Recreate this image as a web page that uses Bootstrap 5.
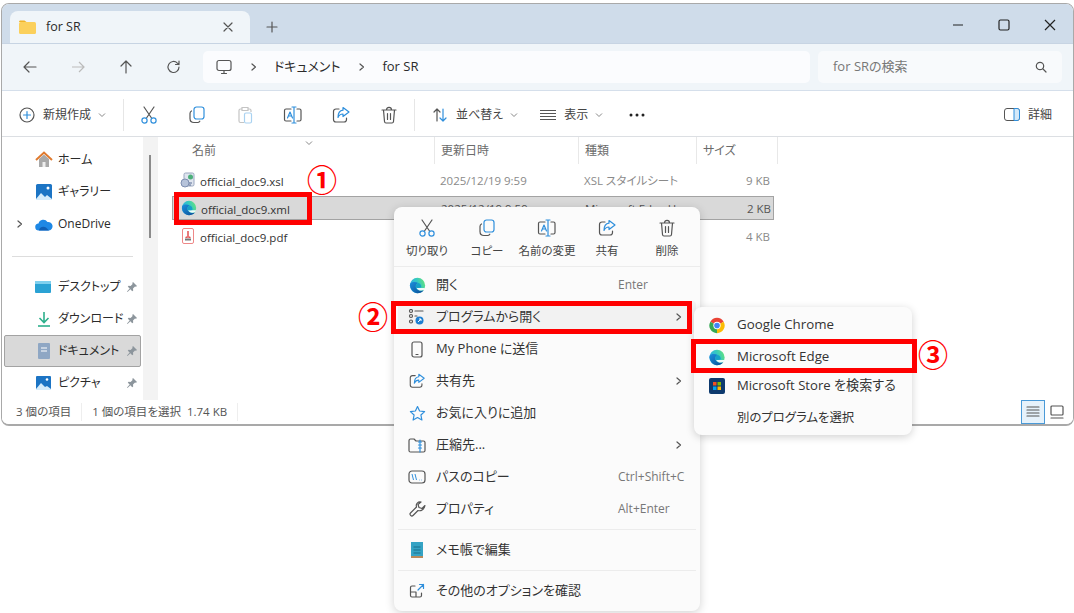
<!DOCTYPE html>
<html lang="ja">
<head>
  <meta charset="UTF-8" />
  <title>for SR</title>
  <link href="https://cdn.jsdelivr.net/npm/bootstrap@5.3.0/dist/css/bootstrap.min.css" rel="stylesheet" />
  <style>
    body { font-family: "Open Sans", "Noto Sans CJK JP", sans-serif; font-size: 12px; color: #2b2b2b; background: #fff; font-feature-settings: "palt"; }
    svg { flex: none; display: block; }
    .ln { fill: none; stroke: #555; stroke-width: 1.2; stroke-linecap: round; stroke-linejoin: round; }
    .ln-blue { fill: none; stroke: #2f8fdc; stroke-width: 1.2; stroke-linecap: round; stroke-linejoin: round; }
    .stage { width: 1074px; height: 613px; overflow: hidden; }
    .win { width: 1073px; height: 423px; margin: 3px 0 0 1px; border: 1px solid #a9a9a9; border-bottom-width: 2px; border-radius: 8px; overflow: hidden; }
    .tabbar { height: 39px; background: #cfdcea; padding: 7px 0 0 8px; }
    .wintab { width: 240px; height: 32px; background: #f0f5f9; border-radius: 8px 8px 0 0; padding: 0 16px 0 9px; }
    .wintab span { margin-left: 10px; font-size: 12.5px; }
    .newtab { margin-left: 16px; }
    .winctl { margin-left: auto; margin-top: -4px; margin-right: 17px; gap: 32px; }
    .navrow { height: 48px; background: #f0f5f9; border-top: 1px solid #c7d4e3; border-bottom: 1px solid #d5dfeb; padding: 0 10px 0 4px; }
    .navbtn { width: 48px; }
    .addr { margin-left: 5px; width: 607px; height: 32px; background: #fbfcfe; border-radius: 5px; padding-left: 13px; font-size: 13px; }
    .crumb { margin-left: 15px; }
    .crumbgt { margin-left: 17px; }
    .searchbox { margin-left: 8px; width: 244px; height: 32px; background: #f8fafc; border-radius: 5px; padding: 0 15px; color: #777; font-size: 13px; }
    .toolrow { height: 47px; background: #fff; border-bottom: 1px solid #dcdfe3; color: #444; padding-top: 2px; }
    .toolbtn { width: 48px; }
    .toolsep { width: 1px; height: 32px; background: #e6e6e6; margin: 0 1px; }
    .chev-s { margin-left: 6px; }
    .plusicon { margin-left: 17px; }
    .viewicon { margin-left: 21px; }
    .moreicon { margin-left: 25px; }
    .detaillabel { margin-left: 8px; margin-right: 21px; }
    .filemain { height: 264px; }
    .side { width: 141px; padding-top: 7px; overflow: hidden; flex: none; }
    .sideitem { height: 32px; position: relative; padding-left: 33px; font-size: 12px; }
    .sideitem.active { background: #d9d9d9; border: 1px solid #a3a3a3; margin: 0 2px; padding-left: 30px; border-radius: 2px; }
    .sidename { margin-left: 5px; white-space: nowrap; }
    .sidepin { margin-left: auto; margin-right: 5px; }
    .sideitem.active .sidepin { margin-right: 2px; }
    .oneexp { left: 13px; }
    .sidesep { height: 1px; background: #ddd; margin: 16px 10px 14px 10px; }
    .sidetrack { width: 15px; background: #f3f3f3; flex: none; position: relative; }
    .sidethumb { position: absolute; left: 6px; top: 18px; width: 2px; height: 83px; background: #8b8b8b; }
    .filelist { padding-left: 14px; position: relative; }
    .gridrow { display: grid; grid-template-columns: 262px 144px 118px 82px; width: 602px; }
    .headrow { height: 27px; color: #6b6b6b; margin-bottom: 4px; }
    .headrow > div { border-left: 1px solid #e8e8e8; padding-left: 6px; display: flex; align-items: center; }
    .headrow > div:first-child { border-left: 0; padding-left: 20px; }
    .headrow > div:last-child { border-right: 1px solid #e8e8e8; }
    .sortmark { position: absolute; left: 146px; top: 1px; }
    .filerow { height: 24px; margin-bottom: 4px; align-items: center; color: #8a8a8a; }
    .filerow.picked { background: #d9d9d9; border: 1px solid #a3a3a3; color: #555; }
    .fname { color: #333; padding-left: 8px; gap: 4px; font-size: 11.5px; }
    .fname span { padding-top: 2px; }
    .fcol { padding: 1px 0 0 6px; white-space: nowrap; font-size: 11.5px; }
    .fsize { text-align: right; padding: 1px 8px 0 0; font-size: 11.5px; }
    .statusrow { height: 24px; background: #fff; color: #555; padding-left: 14px; font-size: 11.5px; }
    .statsep { width: 1px; height: 18px; background: #eee; margin: 0 10px; }
    .viewbtn { width: 24px; height: 24px; background: #e6f2fb; border: 1px solid #4a9ad8; margin-left: auto; }
    .viewbtn2 { margin: 0 9px 0 5px; }
    .ctxmenu { position: absolute; left: 394px; top: 207px; width: 306px; height: 404px; background: #fbfbfb; border-radius: 8px; box-shadow: 0 2px 10px rgba(0,0,0,.18); z-index: 5; padding-top: 11px; }
    .ctxtop { height: 48px; padding: 0 3px; }
    .ctxtopbtn { width: 60px; gap: 4px; font-size: 11.5px; color: #444; white-space: nowrap; }
    .ctxline { height: 1px; background: #ececec; margin: 0 0 2px 0; }
    .ctxline.thin { margin: 4px; }
    .ctxitem { height: 32px; padding: 0 10px 0 12px; font-size: 13px; color: #333; position: relative; white-space: nowrap; }
    .ctxitem.current { background: #f2f2f2; margin: 0 4px; padding: 0 12px 0 8px; border-radius: 4px; }
    .ctxicon { width: 22px; margin-right: 8px; display: flex; justify-content: center; }
    .ctxkey { position: absolute; left: 224px; color: #777; font-size: 12px; }
    .ctxarrow { margin-left: auto; margin-right: 6px; }
    .submenu { position: absolute; left: 694px; top: 307px; width: 218px; height: 128px; background: #fbfbfb; border-radius: 8px; box-shadow: 0 2px 8px rgba(0,0,0,.18); z-index: 6; padding-top: 2px; }
    .subitem { height: 32px; padding-left: 13px; font-size: 13.3px; color: #333; white-space: nowrap; }
    .subitem.tight { margin-top: -3px; font-size: 13.1px; }
    .subitem.plainjp { font-size: 12.4px; }
    .subicon { width: 20px; margin-right: 10px; }
    .redbox { position: absolute; border: 5px solid #f00; z-index: 8; }
    .redbox.b1 { left: 174px; top: 192px; width: 138px; height: 33px; }
    .redbox.b2 { left: 391px; top: 301px; width: 301px; height: 33px; }
    .redbox.b3 { left: 691px; top: 339px; width: 226px; height: 34px; }
    .redmark { position: absolute; color: #f00; font-family: "Noto Sans CJK JP", sans-serif; font-weight: 700; font-size: 30px; line-height: 1; z-index: 8; width: 30px; text-align: center; font-feature-settings: normal; }
    .redmark.m1 { left: 307px; top: 163px; }
    .redmark.m2 { left: 358px; top: 300px; }
    .redmark.m3 { left: 918px; top: 338px; }
  </style>
</head>
<body class="m-0">

  <svg width="0" height="0" class="position-absolute">
    <defs>
      <linearGradient id="edgeA" x1="0" y1="0.6" x2="1" y2="0.2"><stop offset="0" stop-color="#2fa8e8" /><stop offset=".55" stop-color="#35c9c0" /><stop offset="1" stop-color="#66e37a" /></linearGradient>
      <linearGradient id="edgeB" x1="0" y1="0" x2="1" y2="1"><stop offset="0" stop-color="#1b8fdc" /><stop offset="1" stop-color="#0b4f96" /></linearGradient>
      <symbol id="i-edge" viewBox="0 0 20 20">
        <circle cx="10" cy="10" r="9" fill="url(#edgeA)" />
        <path d="M1.200 8C.8 14 5 19 10 19c3 0 5.700-1.300 7.500-3.500C14 17 9 16 8 12c-.5-2.500 1-4.500 3-5C7 5 3 5.500 1.200 8z" fill="url(#edgeB)" />
        <path d="M9 12.500c1 3 5 4.300 8.700 2.500l1.100-2.200H11c-1 0-1.500 0-2-.3z" fill="#fff" opacity=".92" />
        <path d="M8 12c-.5-2.500 1-4.500 3-5 2 .5 3.300 2 3.400 4.500 0 .8-.7 1.300-3.400 1.300-1 0-1.500 0-2-.3z" fill="#16a0c8" />
      </symbol>
      <symbol id="i-cut" viewBox="0 0 20 20">
        <path class="ln" d="M5 2l7.500 11M15 2L7.500 13" />
        <circle class="ln-blue" cx="5.500" cy="15.500" r="2.600" /><circle class="ln-blue" cx="14.500" cy="15.500" r="2.600" />
      </symbol>
      <symbol id="i-copy" viewBox="0 0 20 20">
        <rect class="ln-blue" x="7" y="2" width="10" height="12" rx="2.500" />
        <path class="ln" d="M4.500 6C3.500 6.500 3 7.500 3 8.500v5C3 16 4.500 17.500 7 17.500h3.500c1 0 1.800-.5 2.300-1.300" />
      </symbol>
      <symbol id="i-paste" viewBox="0 0 20 20">
        <path fill="none" stroke="#c4c4c4" stroke-width="1.200" d="M7 4H5.500C4.500 4 4 4.500 4 5.500V16c0 1 .5 1.500 1.500 1.500H9M13 4h1.500c1 0 1.500.5 1.500 1.500V7M7 2.500h6v3H7z" />
        <rect x="9.500" y="8" width="7" height="10" rx="1.500" fill="none" stroke="#a9d2f1" stroke-width="1.200" />
      </symbol>
      <symbol id="i-rename" viewBox="0 0 22 20">
        <path class="ln" d="M9 4H4C3 4 2.500 4.500 2.500 5.500v9c0 1 .5 1.500 1.500 1.500h5M15 4h2.500c1 0 1.500.5 1.500 1.500v9c0 1-.5 1.500-1.500 1.500H15" />
        <path class="ln-blue" d="M12 2v16M10 2h4M10 18h4M5.500 13L8 7l2.500 6M6.500 11h3" />
      </symbol>
      <symbol id="i-share" viewBox="0 0 20 20">
        <path class="ln" d="M8 4H5C3.500 4 2.500 5 2.500 6.500v8C2.500 16 3.500 17 5 17h8c1.500 0 2.500-1 2.500-2.500V13" />
        <path class="ln-blue" d="M12 2.500L18 7l-6 4.500V9C9.500 9 8 10 7 12.500 7 8 9 5.500 12 5.200z" />
      </symbol>
      <symbol id="i-trash" viewBox="0 0 20 20">
        <path class="ln" d="M3 5h14M7.500 5c0-3.500 5-3.500 5 0M4.500 5l1 11.500c.1 1 .7 1.500 1.500 1.500h6c.8 0 1.400-.5 1.500-1.500l1-11.500M8.500 8.500v6M11.500 8.500v6" />
      </symbol>
      <symbol id="i-chev" viewBox="0 0 10 10"><path class="ln" d="M3 2l3.500 3L3 8" /></symbol>
      <symbol id="i-down" viewBox="0 0 10 10"><path d="M2 3.500L5 6.500 8 3.500" fill="none" stroke="#888" stroke-width="1" /></symbol>
      <symbol id="i-pin" viewBox="0 0 12 12"><path d="M7 1l4 4-1 .7-1-.3-2 2 .2 2-1 .8L4.400 8.300 1.500 11 1 10.500 3.700 7.600 1.800 5.800l.8-1 2 .2 2-2-.3-1z" fill="#8c959c" /></symbol>
      <symbol id="i-arrow" viewBox="0 0 16 16"><path class="ln" d="M14 8H2M7 3L2 8l5 5" /></symbol>
    </defs>
  </svg>

  <div class="stage position-relative">

    <div class="win d-flex flex-column">

      <div class="tabbar d-flex flex-none">
        <div class="wintab d-flex align-items-center">
          <svg width="17" height="14" viewBox="0 0 17 14"><path d="M0 2c0-1 .5-1.500 1.500-1.500h4L7.500 2H0z" fill="#f0b429" /><rect y="2" width="17" height="12" rx="1.500" fill="#fbd05c" /></svg>
          <span>for SR</span>
          <svg class="ms-auto" width="12" height="12" viewBox="0 0 12 12"><path class="ln" d="M2 2l8 8M10 2l-8 8" /></svg>
        </div>
        <svg class="newtab align-self-center" width="12" height="12" viewBox="0 0 12 12"><path class="ln" d="M6 1v10M1 6h10" /></svg>
        <div class="winctl d-flex align-items-center">
          <svg width="12" height="12" viewBox="0 0 12 12"><path d="M1 6h10" stroke="#222" stroke-width="1.200" /></svg>
          <svg width="16" height="12" viewBox="0 0 16 12"><rect x="3" y="1" width="10" height="10" rx="1.500" fill="none" stroke="#222" stroke-width="1.200" /></svg>
          <svg width="12" height="12" viewBox="0 0 12 12"><path d="M1 1l10 10M11 1L1 11" stroke="#222" stroke-width="1.200" /></svg>
        </div>
      </div>

      <div class="navrow d-flex align-items-center flex-none">
        <div class="navbtn d-flex justify-content-center"><svg width="16" height="16"><use href="#i-arrow" /></svg></div>
        <div class="navbtn d-flex justify-content-center"><svg width="16" height="16" viewBox="0 0 16 16"><path fill="none" stroke="#bbb" stroke-width="1.200" d="M2 8h12M9 3l5 5-5 5" /></svg></div>
        <div class="navbtn d-flex justify-content-center"><svg width="16" height="16" viewBox="0 0 16 16"><path class="ln" d="M8 14V2M3 7l5-5 5 5" /></svg></div>
        <div class="navbtn d-flex justify-content-center"><svg width="16" height="16" viewBox="0 0 16 16"><path class="ln" d="M13 8a5.500 5.500 0 1 1-1.600-3.900L13 5.500M13 2v3.500H9.500" /></svg></div>
        <div class="addr d-flex align-items-center">
          <svg width="16" height="16" viewBox="0 0 16 16"><rect class="ln" x="1" y="1.500" width="14" height="10" rx="2" /><path class="ln" d="M5.500 14.500h5M8 11.500v3" /></svg>
          <svg class="crumbgt" width="10" height="10"><use href="#i-chev" /></svg>
          <span class="crumb">ドキュメント</span>
          <svg class="crumbgt" width="10" height="10"><use href="#i-chev" /></svg>
          <span class="crumb">for SR</span>
        </div>
        <div class="searchbox d-flex align-items-center justify-content-between">
          <span>for SRの検索</span>
          <svg width="12" height="12" viewBox="0 0 12 12"><circle class="ln" cx="5" cy="5" r="3.700" /><path class="ln" d="M8 8l3 3" /></svg>
        </div>
      </div>

      <div class="toolrow d-flex align-items-center flex-none">
        <svg class="plusicon" width="16" height="16" viewBox="0 0 16 16"><circle class="ln" cx="8" cy="8" r="7" /><path class="ln-blue" d="M8 4.500v7M4.500 8h7" /></svg>
        <span class="ms-2">新規作成</span>
        <svg class="chev-s" width="10" height="10"><use href="#i-down" /></svg>
        <div class="toolsep ms-3"></div>
        <div class="toolbtn d-flex justify-content-center"><svg width="20" height="20"><use href="#i-cut" /></svg></div>
        <div class="toolbtn d-flex justify-content-center"><svg width="20" height="20"><use href="#i-copy" /></svg></div>
        <div class="toolbtn d-flex justify-content-center"><svg width="20" height="20"><use href="#i-paste" /></svg></div>
        <div class="toolbtn d-flex justify-content-center"><svg width="22" height="20"><use href="#i-rename" /></svg></div>
        <div class="toolbtn d-flex justify-content-center"><svg width="20" height="20"><use href="#i-share" /></svg></div>
        <div class="toolbtn d-flex justify-content-center"><svg width="20" height="20"><use href="#i-trash" /></svg></div>
        <div class="toolsep"></div>
        <svg class="ms-3" width="16" height="16" viewBox="0 0 16 16"><path class="ln" d="M5 14V2M2 5l3-3 3 3" /><path class="ln-blue" d="M11 2v12M8 11l3 3 3-3" /></svg>
        <span class="ms-2">並べ替え</span>
        <svg class="chev-s" width="10" height="10"><use href="#i-down" /></svg>
        <svg class="viewicon" width="16" height="12" viewBox="0 0 16 12"><path class="ln" d="M0 1.500h16M0 4.500h16M0 7.500h16M0 10.500h16" /></svg>
        <span class="ms-2">表示</span>
        <svg class="chev-s" width="10" height="10"><use href="#i-down" /></svg>
        <svg class="moreicon" width="16" height="4" viewBox="0 0 16 4"><circle cx="2" cy="2" r="1.500" fill="#222" /><circle cx="8" cy="2" r="1.500" fill="#222" /><circle cx="14" cy="2" r="1.500" fill="#222" /></svg>
        <svg class="ms-auto" width="16" height="13" viewBox="0 0 16 13"><rect x=".5" y=".5" width="15" height="12" rx="2.500" fill="none" stroke="#555" /><path d="M10 .5h3c1.500 0 2.500 1 2.500 2.500v7c0 1.500-1 2.500-2.500 2.500h-3z" fill="#d5e9f9" stroke="#2f8fdc" /></svg>
        <span class="detaillabel">詳細</span>
      </div>

      <div class="filemain d-flex flex-none">
        <div class="side">
          <div class="sideitem d-flex align-items-center">
            <svg width="18" height="18" viewBox="0 0 18 18"><path d="M4 8v8h10V8L9 3.500z" fill="#a9a9a9" /><path d="M7.500 16v-5h3v5z" fill="#eee" /><path d="M1 9l8-7.500L17 9" fill="none" stroke="#e07a2e" stroke-width="2" /></svg>
            <span class="sidename">ホーム</span>
          </div>
          <div class="sideitem d-flex align-items-center">
            <svg width="18" height="18" viewBox="0 0 18 18"><rect x="1" y="1" width="16" height="16" rx="1.500" fill="#1c74c4" /><path d="M1 16l5-6 4 4 2-2 5 4v1H1z" fill="#d6ecfb" /><circle cx="13" cy="5" r="1.500" fill="#fff" /></svg>
            <span class="sidename">ギャラリー</span>
          </div>
          <div class="sideitem d-flex align-items-center">
            <svg class="position-absolute oneexp" width="10" height="10"><use href="#i-chev" /></svg>
            <svg width="18" height="13" viewBox="0 0 18 13"><path d="M4 12.500a3.500 3.500 0 0 1-.5-7A5 5 0 0 1 12.500 4a4 4 0 0 1 1.500 8.500z" fill="#1e88e5" /><path d="M4 12.500c0-3 4-5 7-3l3 3z" fill="#0f5fb5" /></svg>
            <span class="sidename">OneDrive</span>
          </div>
          <div class="sidesep"></div>
          <div class="sideitem d-flex align-items-center">
            <svg width="18" height="14" viewBox="0 0 18 14"><rect y="1" width="16" height="12" rx="1" fill="#2aa2d4" /><rect y="1" width="16" height="3" fill="#7fd0ee" /></svg>
            <span class="sidename">デスクトップ</span>
            <svg class="sidepin" width="12" height="12"><use href="#i-pin" /></svg>
          </div>
          <div class="sideitem d-flex align-items-center">
            <svg width="18" height="16" viewBox="0 0 18 16"><path d="M9 1v10M4.500 7L9 11.500 13.500 7" fill="none" stroke="#2db08c" stroke-width="1.600" /><path d="M3 15h12" stroke="#2db08c" stroke-width="1.600" /></svg>
            <span class="sidename">ダウンロード</span>
            <svg class="sidepin" width="12" height="12"><use href="#i-pin" /></svg>
          </div>
          <div class="sideitem active d-flex align-items-center">
            <svg width="18" height="16" viewBox="0 0 18 16"><rect x="3" y="0" width="12" height="16" rx="1" fill="#8fa7c4" /><path d="M6 5h6M6 8h6" stroke="#fff" /></svg>
            <span class="sidename">ドキュメント</span>
            <svg class="sidepin" width="12" height="12"><use href="#i-pin" /></svg>
          </div>
          <div class="sideitem d-flex align-items-center">
            <svg width="18" height="16" viewBox="0 0 18 16"><rect x="1" y="1" width="15" height="14" rx="1" fill="#1c74c4" /><path d="M1 14l5-6 4 4 2-1 4 3v1H1z" fill="#d6ecfb" /><circle cx="12" cy="4.500" r="1.300" fill="#fff" /></svg>
            <span class="sidename">ピクチャ</span>
            <svg class="sidepin" width="12" height="12"><use href="#i-pin" /></svg>
          </div>
        </div>
        <div class="sidetrack"><div class="sidethumb"></div></div>

        <div class="filelist flex-grow-1">
          <div class="gridrow headrow">
            <div>名前</div><div>更新日時</div><div>種類</div><div>サイズ</div>
          </div>
          <svg class="sortmark" width="10" height="10"><use href="#i-down" /></svg>

          <div class="gridrow filerow">
            <div class="fname d-flex align-items-center">
              <svg width="16" height="16" viewBox="0 0 16 16"><rect x="4" y="1" width="10" height="13" rx="1.500" fill="#dfe5ef" stroke="#9aa7bf" /><circle cx="10.500" cy="5" r="2.500" fill="#4caf7a" /><circle cx="5" cy="11" r="4" fill="#b6c3da" stroke="#7f8fb0" /><path d="M9 11h3M9 13h2" stroke="#5b6f96" /></svg>
              <span>official_doc9.xsl</span>
            </div>
            <div class="fcol">2025/12/19 9:59</div>
            <div class="fcol">XSL スタイルシート</div>
            <div class="fsize">9 KB</div>
          </div>

          <div class="gridrow filerow picked">
            <div class="fname d-flex align-items-center">
              <svg width="16" height="16"><use href="#i-edge" /></svg>
              <span>official_doc9.xml</span>
            </div>
            <div class="fcol">2025/12/19 9:59</div>
            <div class="fcol">Microsoft Edge H</div>
            <div class="fsize">2 KB</div>
          </div>

          <div class="gridrow filerow">
            <div class="fname d-flex align-items-center">
              <svg width="16" height="16" viewBox="0 0 16 16"><rect x="2.500" y=".5" width="11" height="15" rx="1.500" fill="#fff" stroke="#e88" /><path d="M8 3v5M5.500 9.500c2-1 3-1 5 0" fill="none" stroke="#d33" stroke-width="1.300" /><rect x="5" y="10.500" width="6" height="2" fill="#777" /></svg>
              <span>official_doc9.pdf</span>
            </div>
            <div class="fcol">2025/12/19 9:59</div>
            <div class="fcol"></div>
            <div class="fsize">4 KB</div>
          </div>
        </div>
      </div>

      <div class="statusrow d-flex align-items-center flex-none">
        <span>3 個の項目</span>
        <div class="statsep"></div>
        <span>1 個の項目を選択&nbsp;&nbsp;1.74 KB</span>
        <div class="statsep"></div>
        <div class="viewbtn d-flex align-items-center justify-content-center">
          <svg width="14" height="12" viewBox="0 0 14 12"><path class="ln" d="M1 1h12M1 4h12M1 7h12M1 10h12" /></svg>
        </div>
        <svg class="viewbtn2" width="14" height="14" viewBox="0 0 14 14"><rect class="ln" x="1" y="1" width="12" height="9" rx="1" /><path class="ln" d="M1 13h12" /></svg>
      </div>
    </div>

    <div class="ctxmenu">
      <div class="ctxtop d-flex">
        <div class="ctxtopbtn d-flex flex-column align-items-center"><svg width="20" height="20"><use href="#i-cut" /></svg><span>切り取り</span></div>
        <div class="ctxtopbtn d-flex flex-column align-items-center"><svg width="20" height="20"><use href="#i-copy" /></svg><span>コピー</span></div>
        <div class="ctxtopbtn d-flex flex-column align-items-center"><svg width="22" height="20"><use href="#i-rename" /></svg><span>名前の変更</span></div>
        <div class="ctxtopbtn d-flex flex-column align-items-center"><svg width="20" height="20"><use href="#i-share" /></svg><span>共有</span></div>
        <div class="ctxtopbtn d-flex flex-column align-items-center"><svg width="20" height="20"><use href="#i-trash" /></svg><span>削除</span></div>
      </div>
      <div class="ctxline"></div>

      <div class="ctxitem d-flex align-items-center">
        <span class="ctxicon"><svg width="17" height="17"><use href="#i-edge" /></svg></span>
        <span>開く</span><span class="ctxkey">Enter</span>
      </div>
      <div class="ctxitem current d-flex align-items-center">
        <span class="ctxicon"><svg width="18" height="16" viewBox="0 0 18 16"><path class="ln" d="M7 2h8M7 7h2" /><circle class="ln" cx="3" cy="2" r="1.500" /><circle class="ln" cx="3" cy="7" r="1.500" /><circle class="ln" cx="3" cy="12.500" r="1.500" /><circle cx="11.500" cy="11.500" r="4" fill="#1d7fd1" /><path d="M10 13l3-3M11 10h2v2" stroke="#fff" fill="none" /></svg></span>
        <span>プログラムから開く</span>
        <svg class="ms-auto" width="10" height="10"><use href="#i-chev" /></svg>
      </div>
      <div class="ctxitem d-flex align-items-center">
        <span class="ctxicon"><svg width="12" height="17" viewBox="0 0 12 17"><rect class="ln" x="1" y="1" width="10" height="15" rx="2" /><path class="ln" d="M5 13.500h2" /></svg></span>
        <span>My Phone に送信</span>
      </div>
      <div class="ctxitem d-flex align-items-center">
        <span class="ctxicon"><svg width="18" height="18"><use href="#i-share" /></svg></span>
        <span>共有先</span>
        <svg class="ctxarrow" width="10" height="10"><use href="#i-chev" /></svg>
      </div>
      <div class="ctxitem d-flex align-items-center">
        <span class="ctxicon"><svg width="17" height="17" viewBox="0 0 17 17"><path class="ln-blue" d="M8.500 1.500l2.100 4.500 5 .6-3.700 3.400 1 5-4.400-2.500L4.100 15l1-5L1.400 6.600l5-.6z" /></svg></span>
        <span>お気に入りに追加</span>
      </div>
      <div class="ctxitem d-flex align-items-center">
        <span class="ctxicon"><svg width="18" height="16" viewBox="0 0 18 16"><path class="ln" d="M1 4c0-1 .5-2 1.500-2H6l2 2h7.500c1 0 1.500.5 1.500 1.500v8c0 1-.5 1.500-1.500 1.500h-13C1.500 15 1 14.500 1 13.500z" /><path class="ln-blue" d="M12 3v12M10.500 5h3M10.500 8h3M10.500 11h3" /></svg></span>
        <span>圧縮先...</span>
        <svg class="ctxarrow" width="10" height="10"><use href="#i-chev" /></svg>
      </div>
      <div class="ctxitem d-flex align-items-center">
        <span class="ctxicon"><svg width="18" height="14" viewBox="0 0 18 14"><rect class="ln" x="1" y="1" width="16" height="12" rx="3" /><path d="M4 4l1.500 6M7 4l1.500 6M11 10h.5M13.500 10h.5" stroke="#2f8fdc" fill="none" /></svg></span>
        <span>パスのコピー</span><span class="ctxkey">Ctrl+Shift+C</span>
      </div>
      <div class="ctxitem d-flex align-items-center">
        <span class="ctxicon"><svg width="17" height="17" viewBox="0 0 17 17"><path class="ln" d="M16 4.500l-3 3-3-1-1-3 3-2.500c-3-.6-5.500 2-4.500 5L1.500 12c-1.500 1.500 1 4 2.500 2.500L9 9.500c3 1 6.500-1.500 7-5z" /></svg></span>
        <span>プロパティ</span><span class="ctxkey">Alt+Enter</span>
      </div>
      <div class="ctxline thin"></div>
      <div class="ctxitem d-flex align-items-center">
        <span class="ctxicon"><svg width="14" height="18" viewBox="0 0 14 18"><rect x="1" y="1" width="12" height="14" fill="#35a3c4" /><rect x="1" y="15" width="12" height="2" fill="#b98a5c" /><path d="M3.500 6h7M3.500 9h7M3.500 12h7" stroke="#1a6e8a" /></svg></span>
        <span>メモ帳で編集</span>
      </div>
      <div class="ctxline thin"></div>
      <div class="ctxitem d-flex align-items-center">
        <span class="ctxicon"><svg width="16" height="16" viewBox="0 0 16 16"><path class="ln" d="M6 3H3C2 3 1.500 3.500 1.500 4.500v8c0 1 .5 1.500 1.500 1.500h8c1 0 1.500-.5 1.500-1.500V10M1.500 9H7v5" /><path class="ln-blue" d="M9 7l5.500-5.500M10.500 1.500h4v4" /></svg></span>
        <span>その他のオプションを確認</span>
      </div>
    </div>

    <div class="submenu">
      <div class="subitem d-flex align-items-center">
        <svg class="subicon" width="17" height="17" viewBox="0 0 20 20"><path d="M10 10L2.200 5.500A9 9 0 0 1 17.800 5.500z" fill="#ea4335" /><path d="M10 10l7.800-4.500A9 9 0 0 1 10 19z" fill="#fbbc04" /><path d="M10 10v9A9 9 0 0 1 2.200 5.500z" fill="#34a853" /><circle cx="10" cy="10" r="4.300" fill="#fff" /><circle cx="10" cy="10" r="3.300" fill="#4285f4" /></svg>
        <span>Google Chrome</span>
      </div>
      <div class="subitem d-flex align-items-center">
        <svg class="subicon" width="17" height="17"><use href="#i-edge" /></svg>
        <span>Microsoft Edge</span>
      </div>
      <div class="subitem tight d-flex align-items-center">
        <svg class="subicon" width="16" height="16" viewBox="0 0 16 16"><rect width="16" height="16" rx="2" fill="#0e3a6e" /><rect x="4" y="4" width="3.500" height="3.500" fill="#f25022" /><rect x="8.500" y="4" width="3.500" height="3.500" fill="#7fba00" /><rect x="4" y="8.500" width="3.500" height="3.500" fill="#00a4ef" /><rect x="8.500" y="8.500" width="3.500" height="3.500" fill="#ffb900" /></svg>
        <span>Microsoft Store を検索する</span>
      </div>
      <div class="subitem plainjp d-flex align-items-center">
        <span class="subicon"></span>
        <span>別のプログラムを選択</span>
      </div>
    </div>

    <div class="redbox b1"></div>
    <div class="redbox b2"></div>
    <div class="redbox b3"></div>
    <div class="redmark m1">①</div>
    <div class="redmark m2">②</div>
    <div class="redmark m3">③</div>
  </div>

  <script src="https://cdn.jsdelivr.net/npm/bootstrap@5.3.0/dist/js/bootstrap.bundle.min.js"></script>
</body>
</html>
